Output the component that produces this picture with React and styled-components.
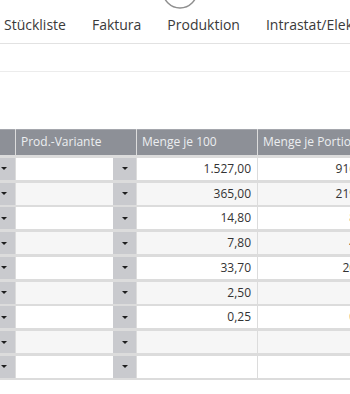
import React from "react";
import styled, { createGlobalStyle } from "styled-components";

const GlobalStyle = createGlobalStyle`
  body {
    margin: 0;
    background: #ffffff;
    font-family: "Open Sans", "Noto Sans", sans-serif;
    color: #333;
  }
`;

const Page = styled.div`
  position: relative;
  width: 350px;
  height: 394px;
  overflow: hidden;
  background: #fff;
`;

const TabBar = styled.div`
  display: flex;
  align-items: flex-end;
  gap: 26px;
  height: 44px;
  padding-left: 4px;
  box-sizing: border-box;
  padding-bottom: 9px;
  border-bottom: 1px solid #e2e2e2;
  white-space: nowrap;
`;

const Tab = styled.div`
  font-size: 14px;
  line-height: 18px;
  color: #3a3a3a;
`;

const Spinner = styled.svg`
  position: absolute;
  left: 161px;
  top: -28px;
`;

const Toolbar = styled.div`
  height: 27px;
  border-bottom: 1px solid #ececec;
`;

const Table = styled.div`
  margin-top: 57px;
  width: 380px;
  display: flex;
  flex-direction: column;
  gap: 2.75px;
  background: #dcdcdc;
  padding-bottom: 2px;
`;

const Row = styled.div`
  display: grid;
  grid-template-columns: 15px 120px 120px 121px;
  column-gap: 1px;
  height: ${(p) => (p.header ? "26px" : "22px")};
`;

const HeadCell = styled.div`
  background: #8d9097;
  color: #eceef0;
  font-size: 12px;
  line-height: 26px;
  padding-left: 5px;
  white-space: nowrap;
  overflow: hidden;
  box-shadow: inset 0 1px 0 #a5a7ad;
`;

const Caret = styled.span`
  width: 0;
  height: 0;
  border-left: 3px solid transparent;
  border-right: 3px solid transparent;
  border-top: 3px solid #1e1e1e;
`;

const DropButton = styled.div`
  display: flex;
  align-items: center;
  justify-content: ${(p) => (p.edge ? "flex-start" : "center")};
  padding-left: ${(p) => (p.edge ? "1px" : "0")};
  background: #c9cace;
  width: ${(p) => (p.edge ? "auto" : "23px")};
`;

const SelectCell = styled.div`
  display: flex;
  background: ${(p) => (p.alt ? "#f6f6f6" : "#ffffff")};
`;

const SelectField = styled.div`
  flex: 1;
`;

const NumCell = styled.div`
  background: ${(p) => (p.alt ? "#f6f6f6" : "#ffffff")};
  font-size: 12px;
  line-height: 22px;
  text-align: right;
  padding-right: 6px;
  color: #333;
  white-space: nowrap;
`;

const rows = [
  ["1.527,00", "916,20"],
  ["365,00", "219,00"],
  ["14,80", "8,88"],
  ["7,80", "4,68"],
  ["33,70", "20,22"],
  ["2,50", "1,50"],
  ["0,25", "0,15"],
  ["", ""],
  ["", ""],
];

export default function App() {
  return (
    <Page>
      <GlobalStyle />
      <TabBar>
        <Tab>Stückliste</Tab>
        <Tab>Faktura</Tab>
        <Tab>Produktion</Tab>
        <Tab>Intrastat/Elektronik</Tab>
      </TabBar>
      <Spinner width="38" height="38" viewBox="0 0 38 38">
        <circle cx="19" cy="19" r="17" fill="none" stroke="#8f8f8f" strokeWidth="1.5" />
      </Spinner>
      <Toolbar />
      <Table>
        <Row header>
          <HeadCell />
          <HeadCell>Prod.-Variante</HeadCell>
          <HeadCell>Menge je 100</HeadCell>
          <HeadCell>Menge je Portion</HeadCell>
        </Row>
        {rows.map((r, i) => (
          <Row key={i}>
            <DropButton edge>
              <Caret />
            </DropButton>
            <SelectCell alt={i % 2 === 1}>
              <SelectField />
              <DropButton>
                <Caret />
              </DropButton>
            </SelectCell>
            <NumCell alt={i % 2 === 1}>{r[0]}</NumCell>
            <NumCell alt={i % 2 === 1}>{r[1]}</NumCell>
          </Row>
        ))}
      </Table>
    </Page>
  );
}
